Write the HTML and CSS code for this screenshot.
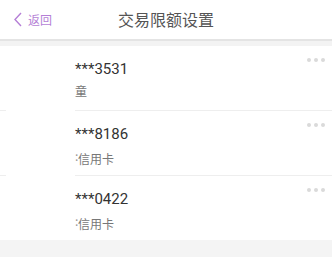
FILE: index.html
```html
<!DOCTYPE html>
<html>
<head>
<meta charset="utf-8">
<link rel="stylesheet" href="styles.css">
</head>
<body>
<div class="page">
  <header class="nav">
    <div class="back">
      <svg class="chev" width="8" height="15" viewBox="0 0 8 15"><path d="M7 1 L1 7.5 L7 14" fill="none" stroke="#b57fd6" stroke-width="1.4"/></svg>
      <span class="back-text">返回</span>
    </div>
    <div class="title">交易限额设置</div>
    <div class="nav-spacer"></div>
  </header>
  <div class="gap"></div>
  <div class="list">
    <div class="row">
      <div class="blank"></div>
      <div class="info">
        <div class="num">***3531</div>
        <div class="sub">童</div>
      </div>
      <div class="more"><i></i><i></i><i></i></div>
    </div>
    <div class="sep"><span class="sep-a"></span><span class="sep-b"></span></div>
    <div class="row">
      <div class="blank"></div>
      <div class="info">
        <div class="num">***8186</div>
        <div class="sub"><span class="cut">:</span>信用卡</div>
      </div>
      <div class="more"><i></i><i></i><i></i></div>
    </div>
    <div class="sep"><span class="sep-a"></span><span class="sep-b"></span></div>
    <div class="row">
      <div class="blank"></div>
      <div class="info">
        <div class="num">***0422</div>
        <div class="sub"><span class="cut">:</span>信用卡</div>
      </div>
      <div class="more"><i></i><i></i><i></i></div>
    </div>
  </div>
  <div class="footer"></div>
</div>
</body>
</html>
```
FILE: styles.css
```css
html, body {
  margin: 0;
  padding: 0;
  background: #ffffff;
}
.page {
  width: 332px;
  height: 257px;
  overflow: hidden;
  font-family: "Roboto", "Noto Sans CJK SC", sans-serif;
  display: flex;
  flex-direction: column;
}
.nav {
  height: 39px;
  display: flex;
  align-items: center;
  background: #fff;
  border-bottom: 2px solid #e4e4e4;
  box-sizing: content-box;
}
.back {
  width: 90px;
  display: flex;
  align-items: center;
  padding-left: 14px;
  box-sizing: border-box;
}
.chev {
  display: block;
}
.back-text {
  margin-left: 6px;
  font-family: "Noto Sans CJK SC", sans-serif;
  font-size: 12px;
  color: #b57fd6;
  line-height: 16px;
}
.title {
  flex: 1;
  text-align: center;
  font-family: "Noto Sans CJK SC", sans-serif;
  font-size: 16px;
  color: #555;
  line-height: 20px;
  padding-bottom: 2px;
}
.nav-spacer {
  width: 90px;
}
.gap {
  height: 5px;
  background: #f3f3f3;
}
.list {
  background: #fff;
}
.row {
  height: 64px;
  display: flex;
}
.blank {
  width: 75px;
  flex: none;
}
.info {
  flex: 1;
  padding-top: 14px;
}
.num {
  font-size: 15px;
  line-height: 18px;
  color: #333;
}
.sub {
  margin-top: 5px;
  font-family: "Noto Sans CJK SC", sans-serif;
  font-size: 12px;
  line-height: 16px;
  color: #777;
}
.cut {
  display: inline-block;
  width: 3px;
  overflow: hidden;
  color: #999;
}
.more {
  display: flex;
  gap: 3px;
  padding-top: 12px;
  padding-right: 7px;
}
.more i {
  display: block;
  width: 4px;
  height: 4px;
  border-radius: 50%;
  background: #dadada;
}
.sep {
  height: 1px;
  display: flex;
}
.sep-a {
  width: 6px;
  background: #eeeeee;
}
.sep-b {
  margin-left: 69px;
  flex: 1;
  background: #eeeeee;
}
.footer {
  flex: 1;
  background: #f4f4f4;
}
```
